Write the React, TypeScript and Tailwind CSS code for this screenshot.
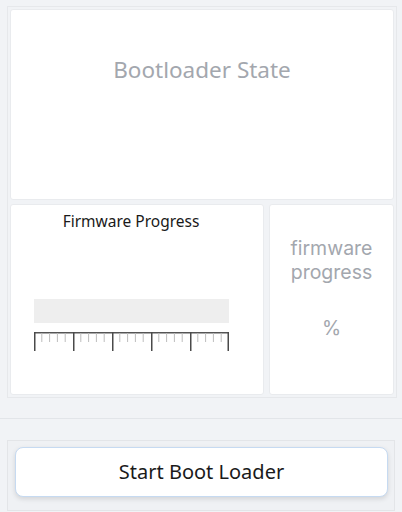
import React from "react";

function Ruler() {
  const w = 195;
  const seg = w / 5;
  const majors = [0, 1, 2, 3, 4, 5].map((i) => Math.min(i * seg + 0.75, w - 0.75));
  const minors: number[] = [];
  for (let i = 0; i < 5; i++) {
    for (let j = 1; j < 5; j++) minors.push(i * seg + (j * seg) / 5);
  }
  return (
    <svg width={w} height={20} viewBox={`0 0 ${w} 20`} className="block">
      <line x1={0} y1={0.75} x2={w} y2={0.75} stroke="#555" strokeWidth={1.5} />
      {minors.map((x, i) => (
        <line key={i} x1={x} y1={1} x2={x} y2={10} stroke="#bdbdbd" strokeWidth={1} />
      ))}
      {majors.map((x, i) => (
        <line key={"m" + i} x1={x} y1={0} x2={x} y2={19} stroke="#4a4a4a" strokeWidth={1.5} />
      ))}
    </svg>
  );
}

export default function App() {
  return (
    <div
      className="w-[402px] h-[512px] bg-[#f1f3f6] flex flex-col overflow-hidden"
      style={{ fontFamily: '"Noto Sans", "Open Sans", sans-serif' }}
    >
      <div className="ml-[7px] mr-[5px] mt-[6px] border border-[#e6e8eb] p-[2px] flex flex-col gap-[4px]">
        <div className="h-[191px] bg-white rounded-[3px] border border-[#e9ebee] flex justify-center pt-[46px]">
          <span className="text-[22.5px] leading-[28px] text-[#a3a7ae]">Bootloader State</span>
        </div>
        <div className="flex gap-[5px] h-[191px]">
          <div className="w-[254px] bg-white rounded-[3px] border border-[#e9ebee] flex flex-col items-center pt-[6px] pr-[12px]">
            <span className="text-[15.5px] leading-[20px] text-[#1a1a1a]">Firmware Progress</span>
            <div className="mt-[68px] w-[195px] h-[24px] bg-[#eeeeee]" />
            <div className="mt-[9px]">
              <Ruler />
            </div>
          </div>
          <div className="flex-1 bg-white rounded-[3px] border border-[#e9ebee] flex flex-col items-center pt-[31px] font-['Inter',sans-serif] font-normal">
            <span className="block text-[19.5px] leading-[24px] text-[#a3a7ae] text-center">firmware</span>
            <span className="block text-[19.5px] leading-[24px] text-[#a3a7ae] text-center">progress</span>
            <span className="mt-[32px] text-[19.5px] leading-[24px] text-[#a3a7ae]">%</span>
          </div>
        </div>
      </div>
      <div className="mt-[20px] h-px bg-[#e2e5e9]" />
      <div className="ml-[7px] mr-[7px] mt-[21px] h-[71px] border border-[#e3e5e8] bg-[#eff1f4] pl-[7px] pr-[6px] pt-[6px]">
        <button className="w-full h-[50px] bg-white rounded-[8px] border border-[#c6daf1] shadow-[0_2px_5px_rgba(0,0,0,0.12)] text-[20px] text-[#1a1a1a]">
          Start Boot Loader
        </button>
      </div>
    </div>
  );
}
